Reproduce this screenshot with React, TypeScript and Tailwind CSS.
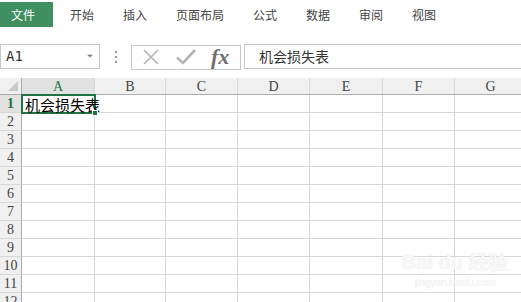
import { ChevronDown } from 'lucide-react'

const tabs = ['开始', '插入', '页面布局', '公式', '数据', '审阅', '视图']

const cols = [
  { name: 'A', w: 73 },
  { name: 'B', w: 71 },
  { name: 'C', w: 72 },
  { name: 'D', w: 72 },
  { name: 'E', w: 73 },
  { name: 'F', w: 72 },
  { name: 'G', w: 72 },
]

const rows = Array.from({ length: 12 }, (_, i) => i + 1)

export default function App() {
  return (
    <div className="relative w-[521px] h-[302px] overflow-hidden bg-white">
      {/* ribbon tabs */}
      <div className="flex items-center h-[29px] pt-[2px] pb-[2px] text-[12px] text-[#444] [font-family:'Noto_Sans_CJK_SC',sans-serif]">
        <div className="w-[53px] h-[25px] bg-[#3f8f60] text-white flex items-center pl-[11px]">
          文件
        </div>
        <div className="flex gap-[29px] ml-[17px]">
          {tabs.map((t) => (
            <span key={t} className="leading-none">
              {t}
            </span>
          ))}
        </div>
      </div>

      {/* formula bar */}
      <div className="flex items-center mt-[15px] h-[25px]">
        <div className="relative w-[100px] h-[25px] border border-[#c6c6c6] flex items-center pl-[5px]">
          <span className="text-[14px] text-[#333] [font-family:'DejaVu_Sans_Mono',monospace]">A1</span>
          <ChevronDown className="absolute right-[4px] top-[6px] w-[10px] h-[10px] text-[#777]" fill="#777" strokeWidth={1} />
        </div>
        <div className="w-[31px] flex flex-col items-center gap-[3px]">
          <span className="w-[2px] h-[2px] bg-[#999]" />
          <span className="w-[2px] h-[2px] bg-[#999]" />
          <span className="w-[2px] h-[2px] bg-[#999]" />
        </div>
        <div className="w-[110px] h-[25px] mt-[1px] border border-[#c6c6c6] flex items-center">
          <svg width="20" height="20" viewBox="0 0 20 20" className="ml-[9px]">
            <path d="M3 3L17 17M17 3L3 17" stroke="#b4b4b4" strokeWidth="1.6" fill="none" />
          </svg>
          <svg width="22" height="20" viewBox="0 0 22 20" className="ml-[14px]">
            <path d="M2 10.5L8 16L20 3" stroke="#b4b4b4" strokeWidth="2.6" fill="none" />
          </svg>
          <span className="ml-[14px] text-[22px] italic font-bold text-[#6e6e6e] leading-none [font-family:'Liberation_Serif',serif]">
            fx
          </span>
        </div>
        <div className="flex-1 h-[25px] ml-[3px] border-y border-l border-[#c6c6c6] flex items-center pl-[14px]">
          <span className="text-[14px] text-[#333] [font-family:'Noto_Sans_CJK_SC',sans-serif]">机会损失表</span>
        </div>
      </div>

      {/* grid */}
      <div className="mt-[9px]">
        <div className="flex h-[17px] bg-[#f0f0f0] border-b border-[#ababab]">
          <div className="relative w-[22px] shrink-0 border-r border-[#ababab] bg-[#f0f0f0]">
            <div className="absolute right-[3px] bottom-[3px] w-0 h-0 border-l-[10px] border-l-transparent border-b-[10px] border-b-[#c8c8c8]" />
          </div>
          {cols.map((c, i) => (
            <div
              key={c.name}
              style={{ width: c.w }}
              className={`shrink-0 flex items-center justify-center text-[14px] border-r border-[#d8d8d8] [font-family:'Liberation_Serif',serif] ${
                i === 0 ? 'bg-[#e1e1e1] text-[#217346]' : 'text-[#444]'
              }`}
            >
              {c.name}
            </div>
          ))}
        </div>
        {rows.map((r) => (
          <div key={r} className="flex h-[18px]">
            <div
              className={`w-[22px] shrink-0 flex items-center justify-center text-[14px] border-r border-b border-r-[#ababab] border-b-[#d8d8d8] [font-family:'Liberation_Serif',serif] ${
                r === 1 ? 'bg-[#e1e1e1] text-[#217346] font-bold' : 'bg-[#f0f0f0] text-[#444]'
              }`}
            >
              {r}
            </div>
            {cols.map((c, i) => (
              <div
                key={c.name}
                style={{ width: c.w }}
                className="relative shrink-0 border-r border-b border-[#d8d8d8]"
              >
                {r === 1 && i === 0 && (
                  <>
                    <div className="absolute -left-px -top-[1px] w-[75px] h-[20px] border-2 border-[#217346] z-10" />
                    <span className="absolute left-[3px] top-[1px] z-20 whitespace-nowrap text-[15px] leading-[17px] text-black [font-family:'Noto_Sans_CJK_SC',sans-serif]">
                      机会损失表
                    </span>
                    <div className="absolute right-[-4px] bottom-[-4px] w-[6px] h-[6px] bg-[#217346] border border-white z-30" />
                  </>
                )}
              </div>
            ))}
          </div>
        ))}
      </div>

      {/* watermark */}
      <div className="absolute left-[402px] top-[252px] flex flex-col items-center text-white/80 pointer-events-none [text-shadow:0_0_1px_#d6d6d6]">
        <span className="text-[20px] font-bold leading-none [font-family:'Liberation_Sans',sans-serif]">Bai du 经验</span>
        <span className="text-[10px] leading-none mt-[6px] [font-family:'Liberation_Sans',sans-serif]">
          jingyan.baidu.com
        </span>
      </div>
    </div>
  )
}
